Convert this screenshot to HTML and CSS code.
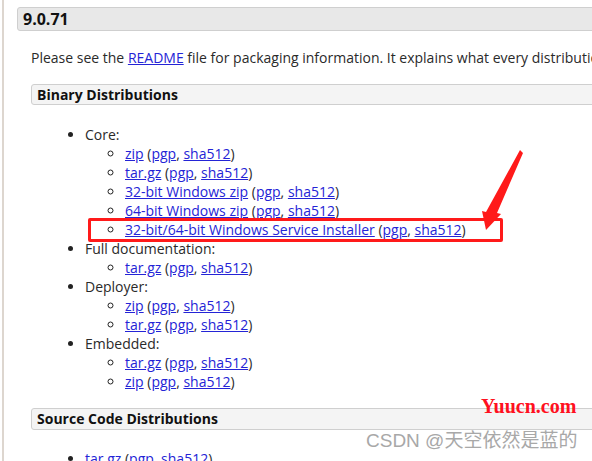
FILE: index.html
```html
<!DOCTYPE html>
<html>
<head>
<meta charset="utf-8">
<link rel="stylesheet" href="styles.css">
</head>
<body>
<div class="page">
  <div class="frame">
    <h3 class="ver">9.0.71</h3>
    <div class="sec">
      <p class="intro">Please see the <a href="#">README</a> file for packaging information. It explains what every distribution contains.</p>
      <h4 class="sub">Binary Distributions</h4>
      <ul class="dl">
        <li>Core:
          <ul>
            <li><a href="#">zip</a> (<a href="#">pgp</a>, <a href="#">sha512</a>)</li>
            <li><a href="#">tar.gz</a> (<a href="#">pgp</a>, <a href="#">sha512</a>)</li>
            <li><a href="#">32-bit Windows zip</a> (<a href="#">pgp</a>, <a href="#">sha512</a>)</li>
            <li><a href="#">64-bit Windows zip</a> (<a href="#">pgp</a>, <a href="#">sha512</a>)</li>
            <li class="mark"><a href="#">32-bit/64-bit Windows Service Installer</a> (<a href="#">pgp</a>, <a href="#">sha512</a>)</li>
          </ul>
        </li>
        <li>Full documentation:
          <ul>
            <li><a href="#">tar.gz</a> (<a href="#">pgp</a>, <a href="#">sha512</a>)</li>
          </ul>
        </li>
        <li>Deployer:
          <ul>
            <li><a href="#">zip</a> (<a href="#">pgp</a>, <a href="#">sha512</a>)</li>
            <li><a href="#">tar.gz</a> (<a href="#">pgp</a>, <a href="#">sha512</a>)</li>
          </ul>
        </li>
        <li>Embedded:
          <ul>
            <li><a href="#">tar.gz</a> (<a href="#">pgp</a>, <a href="#">sha512</a>)</li>
            <li><a href="#">zip</a> (<a href="#">pgp</a>, <a href="#">sha512</a>)</li>
          </ul>
        </li>
      </ul>
      <h4 class="sub src-head">Source Code Distributions</h4>
      <ul class="dl src">
        <li><a href="#">tar.gz</a> (<a href="#">pgp</a>, <a href="#">sha512</a>)</li>
        <li><a href="#">zip</a> (<a href="#">pgp</a>, <a href="#">sha512</a>)</li>
      </ul>
    </div>
  </div>
  <svg class="arrow" width="60" height="100" viewBox="470 140 60 100">
    <polygon points="520,150 523,153 497,213 501,214 486,230 482,211 486,212" fill="#ff1a1a"/>
  </svg>
  <div class="wm1">Yuucn.com</div>
  <div class="wm2">CSDN @天空依然是蓝的</div>
</div>
</body>
</html>
```
FILE: styles.css
```css
html, body {
  margin: 0;
  padding: 0;
  background: #fff;
}
.page {
  position: relative;
  width: 592px;
  height: 461px;
  overflow: hidden;
  font-family: "Open Sans", "Noto Sans", sans-serif;
  font-size: 14px;
  line-height: 19px;
  color: #2a2a2a;
}
.frame {
  width: 900px;
  margin-left: 2px;
  border-left: 2px solid #ddd6cf;
  padding: 7px 0 0 13px;
  height: 461px;
  box-sizing: border-box;
}
a {
  color: #2424d6;
  text-decoration: underline;
}
.ver {
  margin: 0;
  height: 22px;
  line-height: 22px;
  padding: 0 5px;
  background: #e8e8e8;
  border: 1px solid #cfcfcf;
  border-radius: 3px;
  font-size: 16px;
  font-weight: bold;
  color: #111;
}
.sec {
  padding-left: 14px;
}
.intro {
  margin: 17px 0 0;
  white-space: nowrap;
}
.sub {
  margin: 17px 0 0;
  height: 19px;
  line-height: 19px;
  padding: 0 5px;
  background: #f4f4f4;
  border: 1px solid #cfcfcf;
  border-radius: 3px;
  font-size: 14px;
  font-weight: bold;
  color: #111;
}
.src-head {
  height: 20px;
  line-height: 20px;
}
.dl {
  margin: 20px 0 14px;
  padding-left: 54px;
  white-space: nowrap;
}
.dl ul {
  margin: 0;
  padding-left: 40px;
  list-style: circle;
}
.dl li::marker {
  color: #222;
}
.src {
  margin-top: 19px;
}
.mark {
  position: relative;
}
.mark::before {
  content: "";
  position: absolute;
  left: -37px;
  top: -2px;
  width: 409px;
  height: 18px;
  border: 3px solid #ff1a1a;
  border-radius: 2px;
}
.arrow {
  position: absolute;
  left: 470px;
  top: 140px;
}
.wm1 {
  position: absolute;
  left: 481px;
  top: 395px;
  font-family: "Liberation Serif", "DejaVu Serif", serif;
  font-size: 20px;
  font-weight: bold;
  line-height: 22px;
  color: #ff1020;
}
.wm2 {
  position: absolute;
  left: 366px;
  top: 430px;
  font-family: "Liberation Sans", "Noto Sans CJK SC", sans-serif;
  font-size: 19px;
  line-height: 22px;
  color: #a8a8a8;
  white-space: nowrap;
}
```
